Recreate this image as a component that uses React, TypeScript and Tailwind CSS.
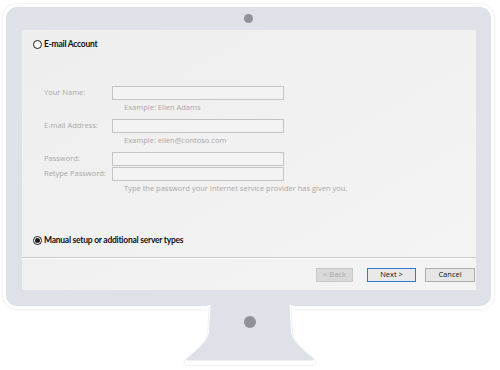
import React from "react";

const font = { fontFamily: '"Open Sans", "Noto Sans", sans-serif' };
const boldFont = { fontFamily: 'Lato, "Open Sans", sans-serif' };

function Radio({ checked }: { checked?: boolean }) {
  return (
    <span className="flex h-[9px] w-[9px] items-center justify-center rounded-full border border-[#1a1a1a] bg-white">
      {checked && <span className="h-[5px] w-[5px] rounded-full bg-[#1a1a1a]" />}
    </span>
  );
}

function Field({ label, hint }: { label: string; hint?: string }) {
  return (
    <div className="flex flex-col">
      <div className="flex items-center">
        <span className="w-[68px] text-[7.5px] leading-none text-[#a9a9a9]">{label}</span>
        <span className="h-[14px] w-[172px] border border-[#c4c4c4] bg-[#f3f3f3]" />
      </div>
      {hint && (
        <span className="ml-[80px] mt-[2px] text-[7.5px] leading-[10px] text-[#a9a9a9]">{hint}</span>
      )}
    </div>
  );
}

function Stand() {
  return (
    <svg width="500" height="64" viewBox="0 304 500 64" className="relative z-10 -mt-[5px]">
      <path
        d="M209 302 L207.5 332 Q206 342 186 357 Q183 361 188 362 L312 362 Q317 361 314 357 Q294 342 292.5 332 L291 302 Z"
        fill="#dfe1e8"
      />
      <path
        d="M209 305 L207.5 332 Q206 342 186 357 Q183 361 188 362 L312 362 Q317 361 314 357 Q294 342 292.5 332 L291 305"
        fill="none"
        stroke="#ffffff"
        strokeWidth="3"
      />
      <path
        d="M209 305 L207.5 332 Q206 342 186 357 Q181 363 188 364 L312 364 Q319 363 314 357 Q294 342 292.5 332 L291 305"
        fill="none"
        stroke="#e6e8ec"
        strokeWidth="1"
        transform="translate(0 1.5)"
        opacity="0.6"
      />
      <circle cx="250" cy="322" r="6" fill="#8f9298" />
    </svg>
  );
}

export default function App() {
  return (
    <div className="flex h-[370px] w-[500px] flex-col overflow-hidden bg-white" style={font}>
      <div className="ml-[3px] mt-[4px] flex h-[305px] w-[491px] flex-col rounded-[14px] border-[3px] border-white bg-[#dfe1e8] shadow-[0_0_3px_rgba(0,0,0,0.12)]">
        <div className="flex h-[23px] items-center justify-center">
          <span className="h-[9px] w-[9px] rounded-full bg-[#8f9298]" />
        </div>
        <div className="ml-[16px] mr-[15px] flex h-[260px] flex-col bg-gradient-to-br from-[#eeeeee] to-[#f4f4f4]">
          <div className="ml-[11px] mt-[10px] flex items-center gap-[2px]">
            <Radio />
            <span className="text-[8.5px] font-bold leading-none tracking-[-0.25px] text-[#111]" style={boldFont}>
              E-mail Account
            </span>
          </div>
          <div className="ml-[22px] mt-[37px] flex flex-col">
            <Field label="Your Name:" hint="Example: Ellen Adams" />
            <div className="mt-[7px]">
              <Field label="E-mail Address:" hint="Example: ellen@contoso.com" />
            </div>
            <div className="mt-[7px]">
              <Field label="Password:" />
            </div>
            <div className="mt-[1px]">
              <Field label="Retype Password:" hint="Type the password your Internet service provider has given you." />
            </div>
          </div>
          <div className="ml-[11px] mt-[43px] flex items-center gap-[2px]">
            <Radio checked />
            <span className="text-[8.5px] font-bold leading-none tracking-[-0.25px] text-[#111]" style={boldFont}>
              Manual setup or additional server types
            </span>
          </div>
          <div className="mt-[12px] h-[1px] bg-[#c9c9c9]" />
          <div className="h-[1px] bg-white" />
          <div className="mt-[9px] flex justify-end gap-[9px] pr-[1px]">
            <span className="mr-[5px] flex h-[14px] w-[37px] items-center justify-center border border-[#c8c8c8] bg-[#d9d9d9] text-[7.5px] text-[#a8a8a8]">
              &lt; Back
            </span>
            <span className="flex h-[14px] w-[49px] items-center justify-center border border-[#2f7bd1] bg-[#e9e9e9] text-[7.5px] text-[#111]">
              Next &gt;
            </span>
            <span className="flex h-[14px] w-[50px] items-center justify-center border border-[#adadad] bg-[#e6e6e6] text-[7.5px] text-[#111]">
              Cancel
            </span>
          </div>
        </div>
      </div>
      <Stand />
    </div>
  );
}
